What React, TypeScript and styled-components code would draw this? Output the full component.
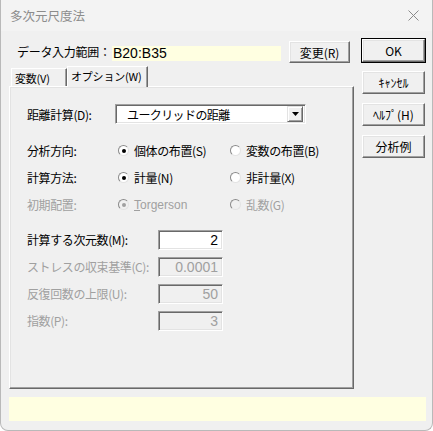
import React from 'react';
import styled, { createGlobalStyle, css } from 'styled-components';

const GlobalStyle = createGlobalStyle`
    * { box-sizing: border-box; }
    html, body { margin: 0; padding: 0; background: #ffffff; }
    body {
        font-family: "Noto Sans CJK JP", "Liberation Sans", sans-serif;
        font-size: 12px;
        font-weight: 400;
        color: #000000;
    }
`;

const radioRows = [
    { label: '分析方向:', disabled: false, options: [{ text: '個体の布置(S)', on: true }, { text: '変数の布置(B)', on: false }] },
    { label: '計算方法:', disabled: false, options: [{ text: '計量(N)', on: true }, { text: '非計量(X)', on: false }] },
    { label: '初期配置:', disabled: true, options: [{ text: 'Torgerson', on: true, underline: true }, { text: '乱数(G)', on: false }] },
];

const numberRows = [
    { label: '計算する次元数(M):', value: '2', disabled: false },
    { label: 'ストレスの収束基準(C):', value: '0.0001', disabled: true },
    { label: '反復回数の上限(U):', value: '50', disabled: true },
    { label: '指数(P):', value: '3', disabled: true },
];

const sideButtons = ['OK', 'ｷｬﾝｾﾙ', 'ﾍﾙﾌﾟ(H)', '分析例'];

const App = () => {
    return (
        <>
            <GlobalStyle />
            <Window>
                <TitleBar>
                    <Title>{'多次元尺度法'}</Title>
                    <CloseButton aria-label="close">
                        <svg width="11" height="11" viewBox="0 0 11 11">
                            <path d="M0.5 0.5 L10.5 10.5 M10.5 0.5 L0.5 10.5" stroke="#8a8a8a" strokeWidth="1" fill="none" />
                        </svg>
                    </CloseButton>
                </TitleBar>
                <Body>
                    <Main>
                        <LeftColumn>
                            <SourceRow>
                                <SourceLabel>{'データ入力範囲：'}</SourceLabel>
                                <SourceField>{'B20:B35'}</SourceField>
                                <PushButton $width={61} $height={22}>{'変更(R)'}</PushButton>
                            </SourceRow>
                            <TabStrip>
                                <Tab $width={56}>{'変数(V)'}</Tab>
                                <Tab $width={81} $active>{'オプション(W)'}</Tab>
                            </TabStrip>
                            <TabPanel>
                                <ComboRow>
                                    <FieldLabel $width={88}>{'距離計算(D):'}</FieldLabel>
                                    <Combo>
                                        <ComboText>{'ユークリッドの距離'}</ComboText>
                                        <ComboArrow>
                                            <svg width="7" height="4" viewBox="0 0 7 4">
                                                <path d="M0 0 H7 L3.5 4 Z" fill="#000000" />
                                            </svg>
                                        </ComboArrow>
                                    </Combo>
                                </ComboRow>
                                <RadioGroup>
                                    {radioRows.map(row => (
                                        <RadioRow key={row.label}>
                                            <FieldLabel $width={91} $disabled={row.disabled}>{row.label}</FieldLabel>
                                            {row.options.map(option => (
                                                <RadioOption key={option.text} $disabled={row.disabled}>
                                                    <RadioCircle $checked={option.on} $disabled={row.disabled} />
                                                    <RadioText $latin={option.underline}>
                                                        {option.underline ? <><u>{'T'}</u>{option.text.slice(1)}</> : option.text}
                                                    </RadioText>
                                                </RadioOption>
                                            ))}
                                        </RadioRow>
                                    ))}
                                </RadioGroup>
                                <NumberGroup>
                                    {numberRows.map(row => (
                                        <NumberRow key={row.label}>
                                            <FieldLabel $width={131} $disabled={row.disabled}>{row.label}</FieldLabel>
                                            <NumberBox $disabled={row.disabled}>{row.value}</NumberBox>
                                        </NumberRow>
                                    ))}
                                </NumberGroup>
                            </TabPanel>
                        </LeftColumn>
                        <ButtonColumn>
                            {sideButtons.map((label, i) => (
                                <PushButton key={label} $width={63} $height={23} $default={i === 0}>{label}</PushButton>
                            ))}
                        </ButtonColumn>
                    </Main>
                    <StatusBar />
                </Body>
            </Window>
        </>
    );
};

export default App;

const Window = styled.div`
    width: 433px;
    height: 431px;
    display: flex;
    flex-direction: column;
    background: #f0f0f0;
    border: 1px solid #b9b9b9;
    border-top: none;
    border-radius: 0 0 8px 8px;
    overflow: hidden;
`;

const TitleBar = styled.div`
    height: 31px;
    flex-shrink: 0;
    display: flex;
    align-items: center;
    justify-content: space-between;
    padding: 0 12px 0 9px;
    background: #f3f3f3;
`;

const Title = styled.span`
    font-size: 12.5px;
    color: #8c8c8c;
`;

const CloseButton = styled.div`
    width: 14px;
    height: 14px;
    display: flex;
    align-items: center;
    justify-content: center;
`;

const Body = styled.div`
    flex: 1;
    display: flex;
    flex-direction: column;
    padding: 8px 6px 0 8px;
`;

const Main = styled.div`
    display: flex;
    gap: 8px;
`;

const LeftColumn = styled.div`
    width: 345px;
    display: flex;
    flex-direction: column;
`;

const SourceRow = styled.div`
    height: 24px;
    display: flex;
    align-items: flex-end;
    padding-left: 8px;
`;

const SourceLabel = styled.span`
    width: 95px;
    height: 22px;
    line-height: 22px;
    white-space: nowrap;
    letter-spacing: -0.3px;
`;

const SourceField = styled.div`
    width: 169px;
    height: 15px;
    margin-bottom: 2px;
    margin-right: 8px;
    background: #ffffe1;
    font-family: "Liberation Sans", sans-serif;
    font-size: 14px;
    line-height: 15px;
    padding-left: 1px;
`;

const PushButton = styled.div<{ $width: number; $height: number; $default?: boolean }>`
    width: ${p => p.$width}px;
    height: ${p => p.$height}px;
    display: flex;
    align-items: center;
    justify-content: center;
    background: #f0f0f0;
    border: 1px solid;
    border-color: #ffffff #696969 #696969 #ffffff;
    box-shadow: inset -1px -1px 0 #a0a0a0, inset 1px 1px 0 #e3e3e3;
    white-space: nowrap;
    ${p => p.$default && css`
        outline: 1px solid #000000;
    `}
`;

const TabStrip = styled.div`
    height: 21px;
    margin-top: 2px;
    display: flex;
    align-items: flex-end;
    padding-left: 2px;
    position: relative;
    z-index: 1;
`;

const Tab = styled.div<{ $width: number; $active?: boolean }>`
    width: ${p => p.$width}px;
    height: ${p => (p.$active ? 21 : 18)}px;
    margin-bottom: ${p => (p.$active ? -1 : 0)}px;
    padding: 0 0 ${p => (p.$active ? 2 : 0)}px 3px;
    display: flex;
    align-items: center;
    background: #f0f0f0;
    border: 1px solid;
    border-bottom: none;
    border-color: #ffffff #696969 transparent #ffffff;
    box-shadow: inset -1px 0 0 #a0a0a0;
    white-space: nowrap;
    font-size: 11px;
    letter-spacing: -0.2px;
`;

const TabPanel = styled.div`
    height: 303px;
    border: 1px solid;
    border-color: #ffffff #696969 #696969 #ffffff;
    box-shadow: inset -1px -1px 0 #a0a0a0, inset 1px 1px 0 #e3e3e3;
    padding: 17px 0 0 17px;
    display: flex;
    flex-direction: column;
`;

const ComboRow = styled.div`
    height: 20px;
    display: flex;
    align-items: center;
`;

const FieldLabel = styled.span<{ $width: number; $disabled?: boolean }>`
    width: ${p => p.$width}px;
    flex-shrink: 0;
    white-space: nowrap;
    letter-spacing: -0.4px;
    color: ${p => (p.$disabled ? '#a0a0a0' : '#000000')};
`;

const sunken = css`
    border: 1px solid;
    border-color: #a0a0a0 #ffffff #ffffff #a0a0a0;
    box-shadow: inset 1px 1px 0 #696969, inset -1px -1px 0 #e3e3e3;
`;

const Combo = styled.div`
    width: 191px;
    height: 20px;
    display: flex;
    align-items: center;
    background: #ffffff;
    padding: 2px;
    ${sunken}
`;

const ComboText = styled.span`
    flex: 1;
    padding-left: 9px;
    letter-spacing: -0.6px;
    white-space: nowrap;
`;

const ComboArrow = styled.div`
    width: 16px;
    height: 16px;
    display: flex;
    align-items: center;
    justify-content: center;
    background: #f0f0f0;
    border: 1px solid;
    border-color: #e3e3e3 #696969 #696969 #e3e3e3;
    box-shadow: inset 1px 1px 0 #ffffff, inset -1px -1px 0 #a0a0a0;
`;

const RadioGroup = styled.div`
    margin-top: 13px;
    display: flex;
    flex-direction: column;
`;

const RadioRow = styled.div`
    height: 27px;
    display: flex;
    align-items: center;
`;

const RadioOption = styled.div<{ $disabled?: boolean }>`
    width: 112px;
    display: flex;
    align-items: center;
    gap: 5px;
    color: ${p => (p.$disabled ? '#a0a0a0' : '#000000')};
`;

const RadioCircle = styled.span<{ $checked?: boolean; $disabled?: boolean }>`
    width: 11px;
    height: 11px;
    border-radius: 50%;
    flex-shrink: 0;
    display: flex;
    align-items: center;
    justify-content: center;
    background: ${p => (p.$disabled ? '#f0f0f0' : '#ffffff')};
    border: 1px solid;
    border-color: #8a8a8a #e3e3e3 #e3e3e3 #8a8a8a;
    &::after {
        content: '';
        width: 4px;
        height: 4px;
        border-radius: 50%;
        background: ${p => (p.$disabled ? '#a0a0a0' : '#000000')};
        display: ${p => (p.$checked ? 'block' : 'none')};
    }
`;

const RadioText = styled.span<{ $latin?: boolean }>`
    white-space: nowrap;
    letter-spacing: -0.4px;
    ${p => p.$latin && css`
        font-family: "Liberation Sans", sans-serif;
        letter-spacing: 0;
    `}
`;

const NumberGroup = styled.div`
    margin-top: 8px;
    display: flex;
    flex-direction: column;
`;

const NumberRow = styled.div`
    height: 27px;
    display: flex;
    align-items: center;
`;

const NumberBox = styled.div<{ $disabled?: boolean }>`
    width: 65px;
    height: 20px;
    display: flex;
    align-items: center;
    justify-content: flex-end;
    padding-right: 4px;
    font-family: "Liberation Sans", sans-serif;
    font-size: 14px;
    background: ${p => (p.$disabled ? '#f0f0f0' : '#ffffff')};
    color: ${p => (p.$disabled ? '#a0a0a0' : '#000000')};
    ${sunken}
`;

const ButtonColumn = styled.div`
    width: 63px;
    display: flex;
    flex-direction: column;
    gap: 9px;
`;

const StatusBar = styled.div`
    margin-top: 8px;
    width: 417px;
    height: 24px;
    background: #ffffe1;
`;
